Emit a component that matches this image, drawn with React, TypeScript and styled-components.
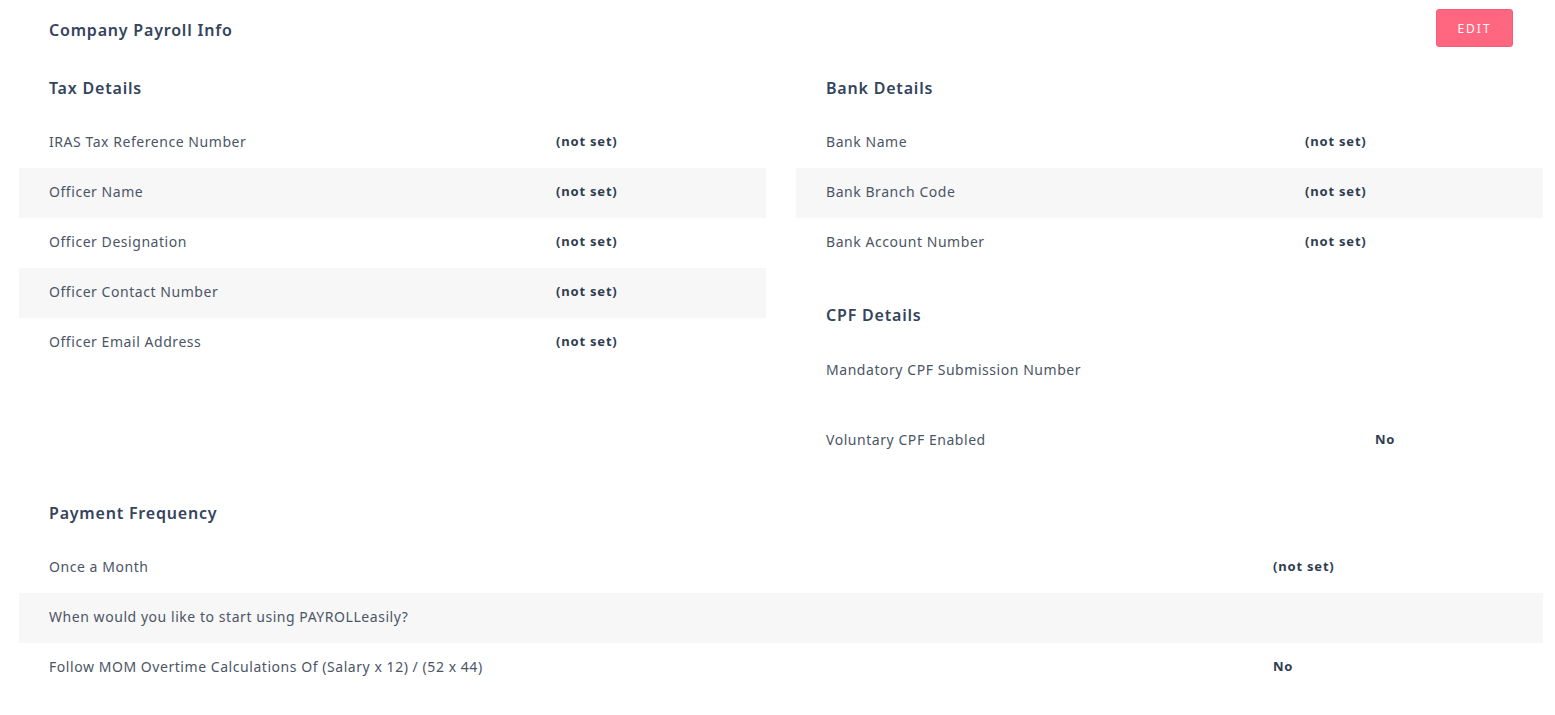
import React from "react";
import styled, { createGlobalStyle } from "styled-components";

const GlobalStyle = createGlobalStyle`
    html, body {
        margin: 0;
        padding: 0;
        background: #fff;
    }
    body {
        font-family: "Noto Sans", "Open Sans", sans-serif;
        color: #34445c;
        -webkit-font-smoothing: antialiased;
    }
`;

const Page = styled.div`
    padding: 0 12px 0 19px;
`;

const Header = styled.div`
    display: flex;
    justify-content: space-between;
    align-items: flex-start;
    height: 56px;
    padding: 0 30px;
`;

const Title = styled.h1`
    margin: 0;
    padding-top: 19px;
    font-size: 16px;
    line-height: 22px;
    font-weight: 600;
    letter-spacing: 0.8px;
    color: #34445c;
`;

const EditButton = styled.button`
    margin-top: 9px;
    width: 77px;
    height: 38px;
    border: 1px solid #f45d77;
    border-radius: 3px;
    background: #ff6680;
    color: #fff;
    font-family: inherit;
    font-size: 12px;
    letter-spacing: 2px;
    cursor: pointer;
`;

const Columns = styled.div`
    display: grid;
    grid-template-columns: 1fr 1fr;
    column-gap: 30px;
`;

const Section = styled.div``;

const SectionTitle = styled.h2<{ $top: number; $bottom: number }>`
    margin: 0;
    padding: ${(p) => p.$top}px 30px ${(p) => p.$bottom}px;
    font-size: 16px;
    line-height: 20px;
    font-weight: 600;
    letter-spacing: 0.8px;
    color: #34445c;
`;

const Row = styled.div<{ $labelWidth: number; $height: number; $striped: boolean }>`
    display: grid;
    grid-template-columns: ${(p) => p.$labelWidth}px 1fr;
    align-items: center;
    height: ${(p) => p.$height}px;
    padding: 0 30px 4px;
    box-sizing: border-box;
    background: ${(p) => (p.$striped ? "#f7f7f7" : "transparent")};
`;

const Label = styled.span`
    font-size: 14px;
    letter-spacing: 0.55px;
    color: #4b5566;
`;

const Value = styled.span`
    font-size: 13px;
    font-weight: 700;
    letter-spacing: 0.8px;
    color: #2f3d50;
`;

type Item = { label: string; value?: string };

const taxItems: Item[] = [
    { label: "IRAS Tax Reference Number", value: "(not set)" },
    { label: "Officer Name", value: "(not set)" },
    { label: "Officer Designation", value: "(not set)" },
    { label: "Officer Contact Number", value: "(not set)" },
    { label: "Officer Email Address", value: "(not set)" },
];

const bankItems: Item[] = [
    { label: "Bank Name", value: "(not set)" },
    { label: "Bank Branch Code", value: "(not set)" },
    { label: "Bank Account Number", value: "(not set)" },
];

const cpfItems: Item[] = [
    { label: "Mandatory CPF Submission Number" },
    { label: "Voluntary CPF Enabled", value: "No" },
];

const paymentItems: Item[] = [
    { label: "Once a Month", value: "(not set)" },
    { label: "When would you like to start using PAYROLLeasily?" },
    { label: "Follow MOM Overtime Calculations Of (Salary x 12) / (52 x 44)", value: "No" },
];

const Rows = ({
    items,
    labelWidth,
    height = 50,
    striped = true,
}: {
    items: Item[];
    labelWidth: number;
    height?: number;
    striped?: boolean;
}) => (
    <div>
        {items.map((item, i) => (
            <Row key={item.label} $labelWidth={labelWidth} $height={height} $striped={striped && i % 2 === 1}>
                <Label>{item.label}</Label>
                <Value>{item.value ?? ""}</Value>
            </Row>
        ))}
    </div>
);

const App = () => {
    return (
        <>
            <GlobalStyle />
            <Page>
                <Header>
                    <Title>Company Payroll Info</Title>
                    <EditButton>EDIT</EditButton>
                </Header>
                <Columns>
                    <Section>
                        <SectionTitle $top={22} $bottom={20}>Tax Details</SectionTitle>
                        <Rows items={taxItems} labelWidth={507} />
                    </Section>
                    <Section>
                        <SectionTitle $top={22} $bottom={20}>Bank Details</SectionTitle>
                        <Rows items={bankItems} labelWidth={479} />
                        <SectionTitle $top={37} $bottom={11}>CPF Details</SectionTitle>
                        <Rows items={cpfItems} labelWidth={549} height={70} striped={false} />
                    </Section>
                </Columns>
                <SectionTitle $top={27} $bottom={20}>Payment Frequency</SectionTitle>
                <Rows items={paymentItems} labelWidth={1224} />
            </Page>
        </>
    );
};

export default App;
